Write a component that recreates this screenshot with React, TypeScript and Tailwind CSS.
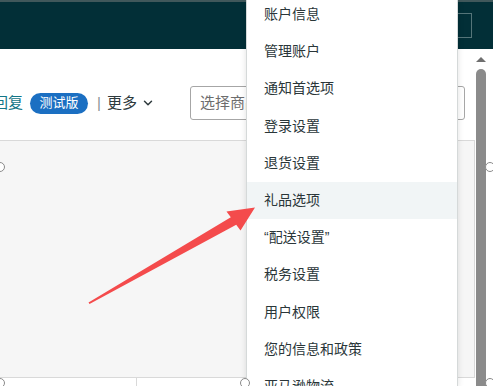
import { ChevronDown } from 'lucide-react';

const menuItems = [
  '账户信息',
  '管理账户',
  '通知首选项',
  '登录设置',
  '退货设置',
  '礼品选项',
  '“配送设置”',
  '税务设置',
  '用户权限',
  '您的信息和政策',
  '亚马逊物流',
];

const handles = [
  'left-[-5px] top-[162px]',
  'left-[485px] top-[162px]',
  'left-[-5px] top-[378px]',
  'left-[240px] top-[378px]',
  'left-[485px] top-[378px]',
];

export default function App() {
  return (
    <div className="relative h-[386px] w-[493px] overflow-hidden bg-white font-['Liberation_Sans','Noto_Sans_CJK_SC',sans-serif]">
      <header className="flex h-[49px] justify-end border-t-2 border-[#40585b] bg-[#022f37] pr-[21px] pt-[11px]">
        <div className="h-[25px] w-[100px] border border-[#557579]" />
      </header>

      <div className="flex">
        <div className="w-[475px]">
          <div className="flex h-[91px] items-center pt-[17px] text-[15px]">
            <span className="-ml-[7px] text-[#137687]">回复</span>
            <span className="ml-[7px] flex h-[21px] w-[58px] items-center justify-center rounded-full bg-[#1b6fc2] text-[13px] text-white">
              测试版
            </span>
            <span className="ml-[9px] text-[#8a9294]">|</span>
            <span className="ml-[6px] text-[#2e3a3d]">更多</span>
            <ChevronDown className="ml-[4px] h-[14px] w-[14px] text-[#2e3a3d]" strokeWidth={2.5} />
            <div className="ml-[35px] mr-[10px] flex h-[34px] flex-1 items-center rounded-[3px] border border-[#a6a6a6] pl-[9px] text-[15px] text-[#6d6d6d]">
              选择商品
            </div>
          </div>

          <div className="flex h-[238px] border-y border-[#d9d9d9]">
            <div className="w-[247px] border-r border-[#d9d9d9] bg-[#f6f6f6]" />
            <div className="ml-[6px] flex-1 border-r border-[#d9d9d9] bg-[#f6f6f6]" />
          </div>

          <div className="flex h-[8px]">
            <div className="w-[137px] border-r border-[#d9d9d9]" />
          </div>
        </div>

        <div className="flex w-[12px] flex-col items-center pt-[8px]">
          <div className="h-0 w-0 border-x-[5px] border-b-[5px] border-x-transparent border-b-[#6f6f6f]" />
          <div className="mt-[7px] h-[330px] w-[10px] rounded-t-full bg-[#8b8b8b]" />
        </div>
      </div>

      <nav className="absolute left-[246px] top-0 h-full w-[212px] border-x border-[#d5d9d9] bg-white shadow-[0_2px_6px_rgba(0,0,0,0.12)]">
        <ul className="-mt-[4px]">
          {menuItems.map((item) => (
            <li
              key={item}
              className={`flex h-[37.2px] items-center pl-[17px] text-[14px] text-[#2a3639] ${
                item === '礼品选项' ? 'bg-[#f1f5f6]' : ''
              }`}
            >
              {item}
            </li>
          ))}
        </ul>
      </nav>

      {handles.map((pos) => (
        <div key={pos} className={`absolute h-[10px] w-[10px] rounded-full border border-[#8a8a8a] bg-white ${pos}`} />
      ))}

      <svg className="pointer-events-none absolute left-0 top-0" width="493" height="386" viewBox="0 0 493 386">
        <polygon
          points="88.5,302.5 230.8,217.3 226.5,211.5 255,207.5 240.5,230.5 236.2,224.7 89.5,304"
          fill="#f44b4c"
        />
      </svg>
    </div>
  );
}
